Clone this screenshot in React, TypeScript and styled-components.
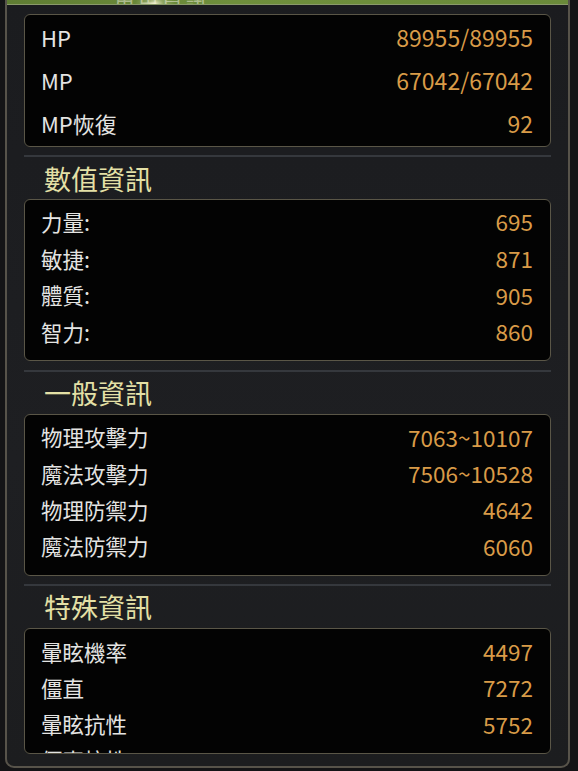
import styled, { createGlobalStyle } from 'styled-components';

const GlobalStyle = createGlobalStyle`
  html, body {
    margin: 0;
    padding: 0;
    background: #141416;
  }
  * {
    box-sizing: border-box;
  }
`;

const Page = styled.div`
  width: 578px;
  height: 771px;
  overflow: hidden;
  background: #141416;
  font-family: 'Noto Sans CJK TC', 'Noto Sans', sans-serif;
`;

const Frame = styled.div`
  position: relative;
  margin: 0 8px 0 5px;
  height: 768px;
  background: linear-gradient(180deg, #1b1c1f 0%, #1e1f22 60%, #1c1d1f 100%);
  border-left: 2px solid #57534a;
  border-right: 2px solid #57534a;
  border-bottom: 2px solid #57534a;
  border-radius: 0 0 9px 9px;
  overflow: hidden;
`;

// 上方綠色標題列
const TopBar = styled.div`
  position: relative;
  height: 5px;
  background: linear-gradient(90deg, #5f7d33 0%, #6f8f3c 40%, #6a8a3a 100%);
  border-bottom: 1px solid #8a9a6a;
  display: flex;
  align-items: flex-end;
  padding-left: 106px;
  overflow: hidden;
`;

const TopBarText = styled.span`
  font-size: 22px;
  line-height: 22px;
  color: rgba(220, 224, 200, 0.6);
  margin-bottom: -6px;
  letter-spacing: 2px;
`;

const Glow = styled.div`
  position: absolute;
  left: 128px;
  top: -10px;
  width: 40px;
  height: 28px;
  background: radial-gradient(ellipse at center, rgba(255, 250, 220, 0.85) 0%, rgba(255, 250, 220, 0.25) 30%, rgba(255, 250, 220, 0) 70%);
  pointer-events: none;
`;

const Content = styled.div`
  padding: 9px 17px 0 17px;
`;

const Box = styled.div<{ $padTop: number; $padBottom: number; $height?: number }>`
  background: #030303;
  border: 1px solid #5a5647;
  border-radius: 6px;
  padding: ${p => p.$padTop}px 17px ${p => p.$padBottom}px 16px;
  ${p => (p.$height ? `height: ${p.$height}px; overflow: hidden;` : '')}
`;

const Row = styled.div<{ $h: number; $size: number }>`
  display: flex;
  justify-content: space-between;
  align-items: center;
  height: ${p => p.$h}px;
  font-size: ${p => p.$size}px;
`;

const Label = styled.span`
  color: #e4e4e2;
`;

const Value = styled.span<{ $size: number }>`
  color: #d99b48;
  font-size: ${p => p.$size}px;
`;

const Separator = styled.div<{ $gap: number }>`
  margin-top: ${p => p.$gap}px;
  height: 2px;
  background: #35383d;
`;

const Title = styled.div`
  height: 42px;
  display: flex;
  align-items: center;
  padding-left: 20px;
  font-size: 27px;
  color: #e4e0a6;
`;

type Stat = [string, string];

const basic: Stat[] = [
  ['HP', '89955/89955'],
  ['MP', '67042/67042'],
  ['MP恢復', '92'],
];

const numeric: Stat[] = [
  ['力量:', '695'],
  ['敏捷:', '871'],
  ['體質:', '905'],
  ['智力:', '860'],
];

const general: Stat[] = [
  ['物理攻擊力', '7063~10107'],
  ['魔法攻擊力', '7506~10528'],
  ['物理防禦力', '4642'],
  ['魔法防禦力', '6060'],
];

const special: Stat[] = [
  ['暈眩機率', '4497'],
  ['僵直', '7272'],
  ['暈眩抗性', '5752'],
  ['僵直抗性', '3016'],
];

const renderRows = (list: Stat[], h: number, size: number, valueSize: number) =>
  list.map(([label, value], i) => (
    <Row key={i} $h={h} $size={size}>
      <Label>{label}</Label>
      <Value $size={valueSize}>{value}</Value>
    </Row>
  ));

export default function App() {
  return (
    <Page>
      <GlobalStyle />
      <Frame>
        <TopBar>
          <TopBarText>角色資訊</TopBarText>
          <Glow />
        </TopBar>
        <Content>
          <Box $padTop={0} $padBottom={2}>
            {renderRows(basic, 43, 22, 23)}
          </Box>

          <Separator $gap={8} />
          <Title>數值資訊</Title>
          <Box $padTop={3} $padBottom={10}>
            {renderRows(numeric, 36.7, 21.5, 22.5)}
          </Box>

          <Separator $gap={9} />
          <Title>一般資訊</Title>
          <Box $padTop={4} $padBottom={11}>
            {renderRows(general, 36.3, 21.5, 22.5)}
          </Box>

          <Separator $gap={8} />
          <Title>特殊資訊</Title>
          <Box $padTop={4} $padBottom={0} $height={126}>
            {renderRows(special, 36.3, 21.5, 22.5)}
          </Box>
        </Content>
      </Frame>
    </Page>
  );
}
